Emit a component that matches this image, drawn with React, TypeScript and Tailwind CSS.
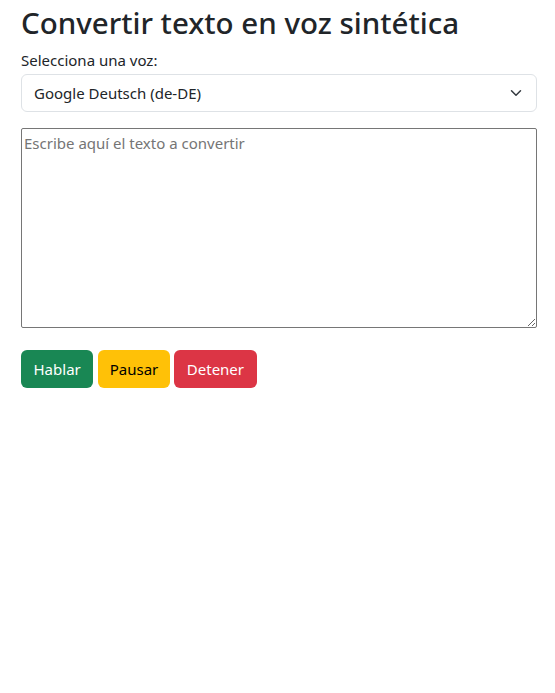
import { useState } from 'react';

export default function App() {
  const [voice, setVoice] = useState('Google Deutsch (de-DE)');
  const [text, setText] = useState('');

  return (
    <div className="min-h-screen bg-white text-[#212529]" style={{ fontFamily: '"Noto Sans", "Open Sans", sans-serif' }}>
      <div className="pl-[21px] pr-[18px] pt-[5px]">
        <h1 className="text-[29.5px] font-medium leading-[1.2] mb-[8px]">Convertir texto en voz sintética</h1>

        <label className="block text-[15px] leading-[24px] mb-[2px]">Selecciona una voz:</label>
        <div className="relative">
          <select
            value={voice}
            onChange={(e) => setVoice(e.target.value)}
            className="block w-full h-[38px] appearance-none rounded-[6px] border border-[#dee2e6] bg-white pl-3 pr-9 text-[15px] text-[#212529] outline-none"
          >
            <option>Google Deutsch (de-DE)</option>
            <option>Google español (es-ES)</option>
            <option>Google US English (en-US)</option>
          </select>
          <svg className="pointer-events-none absolute right-[15px] top-1/2 -translate-y-1/2" width="12" height="12" viewBox="0 0 16 16" fill="none" stroke="#343a40" strokeWidth="2" strokeLinecap="round" strokeLinejoin="round">
            <path d="m2 5 6 6 6-6" />
          </svg>
        </div>

        <textarea
          value={text}
          onChange={(e) => setText(e.target.value)}
          placeholder="Escribe aquí el texto a convertir"
          className="mt-4 block w-full h-[200px] rounded-[2px] border border-[#767676] px-[2px] pt-[3px] text-[15px] leading-[22px] placeholder:text-[#757575] outline-none"
        />

        <div className="mt-[22px] flex">
          <button className="h-[38px] px-[12.5px] rounded-[6px] bg-[#198754] text-white text-[15px]">Hablar</button>
          <button className="ml-[5px] h-[38px] px-[11.5px] rounded-[6px] bg-[#ffc107] text-black text-[15px]">Pausar</button>
          <button className="ml-[4px] h-[38px] px-[13px] rounded-[6px] bg-[#dc3545] text-white text-[15px]">Detener</button>
        </div>
      </div>
    </div>
  );
}
